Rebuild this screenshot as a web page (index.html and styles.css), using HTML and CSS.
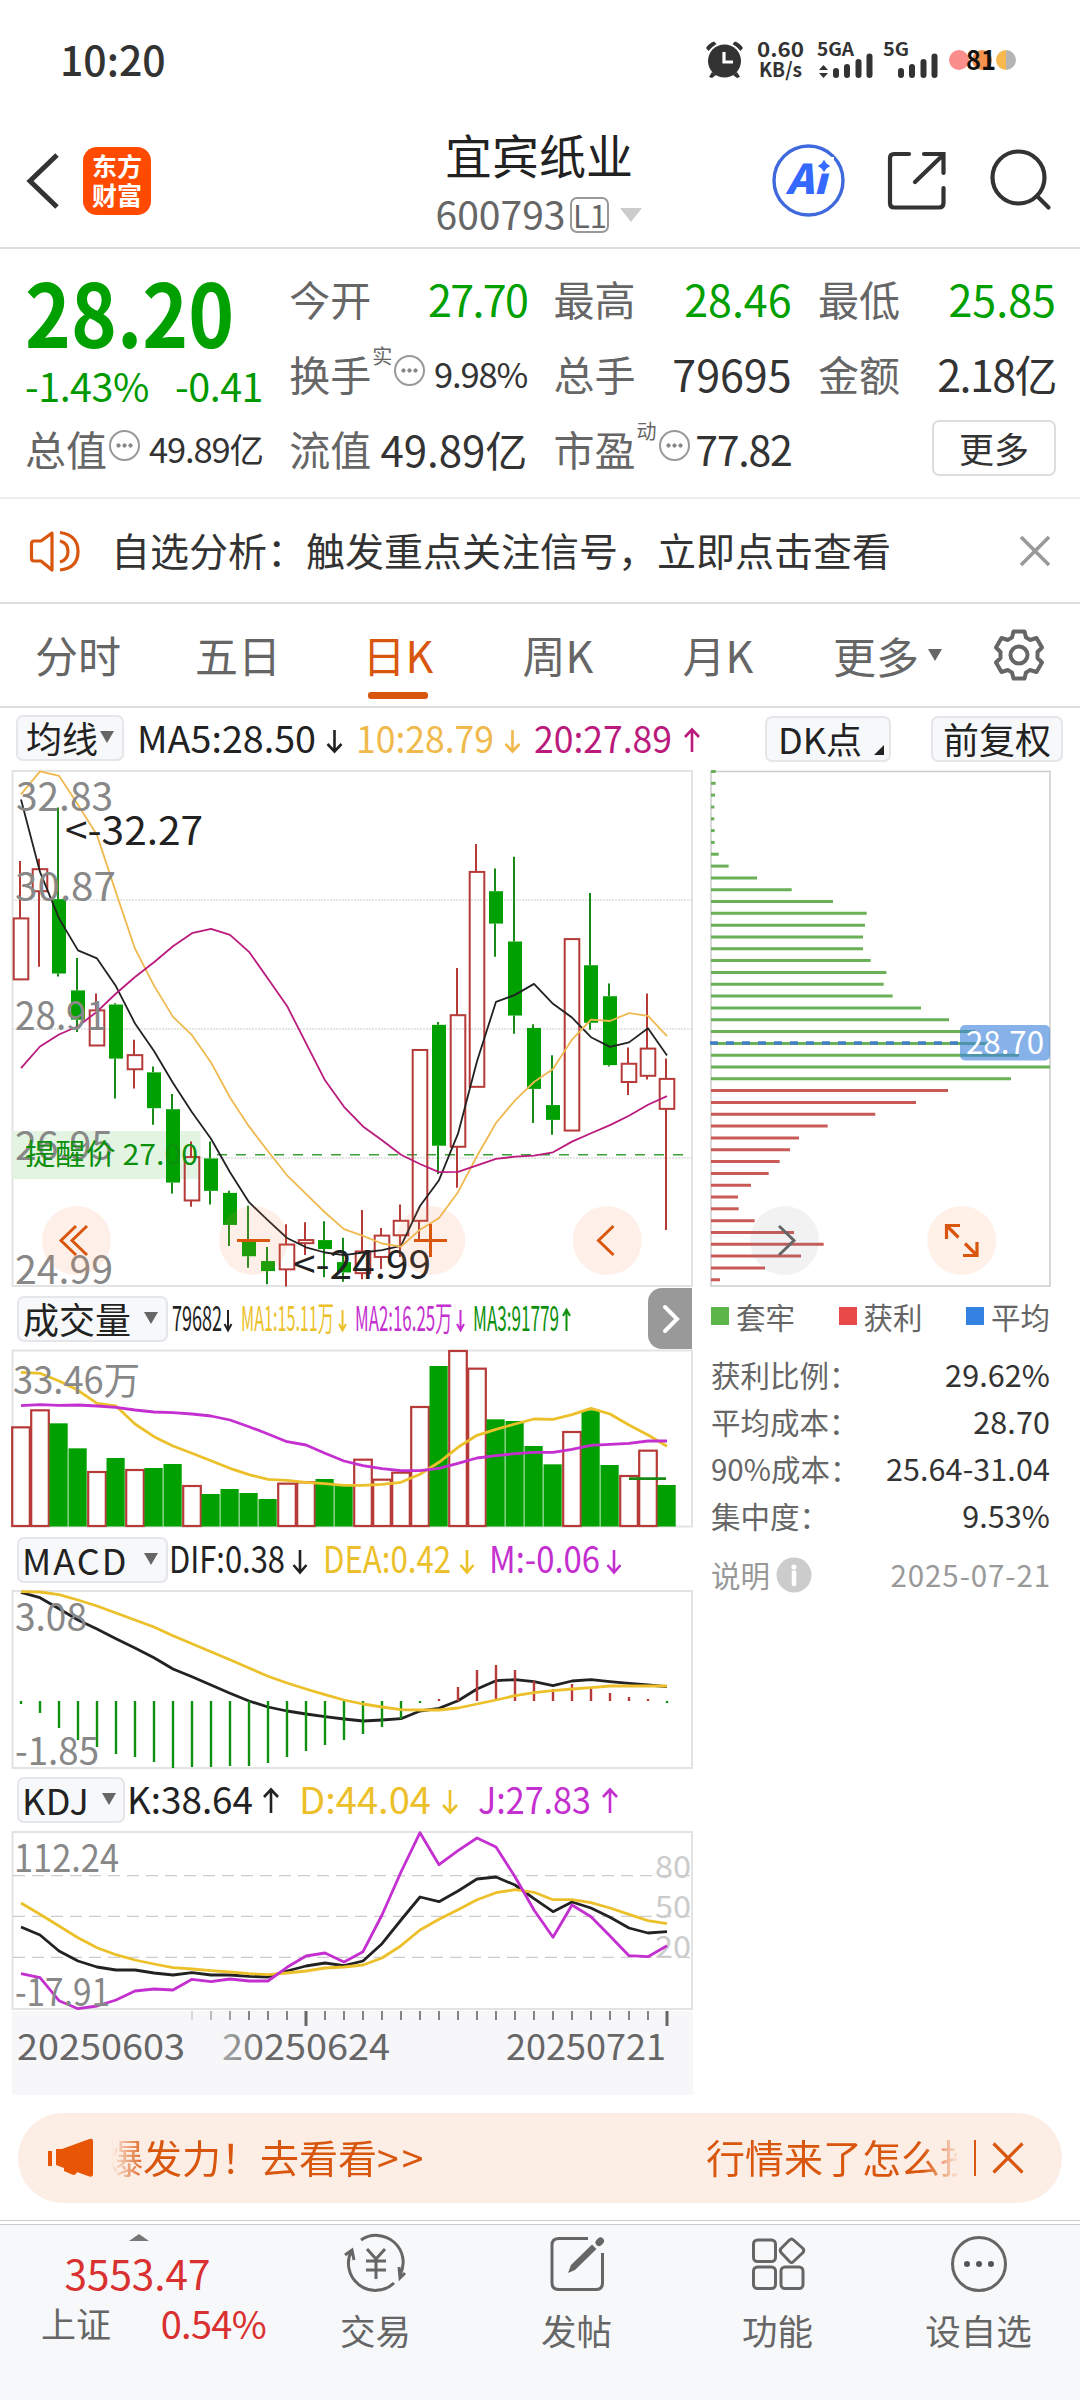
FILE: index.html
```html
<!DOCTYPE html>
<html lang="zh-CN">
<head>
<meta charset="utf-8">
<title>宜宾纸业 600793</title>
<link rel="stylesheet" href="styles.css">
</head>
<body>
<div class="status">
  <span class="clock">10:20</span>
  <svg class="status-icons" width="330" height="60" viewBox="700 30 330 60">
    <g fill="#333"><circle cx="724.500" cy="61" r="16.500"/><path d="M706 48 q3-5 8-6.500 l2.500 2.500 q-5 3-8 7z M743 48 q-3-5-8-6.500 l-2.500 2.500 q5 3 8 7z M712 72 l4 3-4 3-3-1z M737 72 l-4 3 4 3 3-1z"/></g>
    <path d="M724 52 V62 H733" fill="none" stroke="#fff" stroke-width="3.200"/>
    <g class="st-text">
      <text x="757" y="57" font-size="20.500" textLength="47" lengthAdjust="spacingAndGlyphs">0.60</text>
      <text x="759" y="77" font-size="19.500" textLength="43" lengthAdjust="spacingAndGlyphs">KB/s</text>
      <text x="817" y="56" font-size="18" textLength="37" lengthAdjust="spacingAndGlyphs">5GA</text>
      <text x="883" y="56" font-size="18" textLength="26" lengthAdjust="spacingAndGlyphs">5G</text>
    </g>
    <path d="M819 70 l4.500-5 4.500 5z M819 73 l4.500 5 4.500-5z" fill="#333"/>
    <path d="M836 71V75 M847 67V75 M858.500 62V75 M869.500 56.500V75 M901 71V75 M912 67V75 M923.500 62V75 M934.500 56.500V75" stroke="#333" stroke-width="6" stroke-linecap="round"/>
    <circle cx="959" cy="60" r="10" fill="#f98e8a"/><circle cx="982" cy="60" r="10" fill="#f5924d"/>
    <path d="M1006 50 a10 10 0 0 1 0 20z" fill="#b5b5b5"/><path d="M1006 50 a10 10 0 0 0 0 20z" fill="#f7b84e"/>
    <text x="966" y="70" class="batt" textLength="30" lengthAdjust="spacingAndGlyphs">81</text>
  </svg>
</div>

<header class="top">
  <svg width="40" height="60" viewBox="22 152 40 60"><path d="M57 156 L30 182 L57 208" fill="none" stroke="#333" stroke-width="5"/></svg>
  <div class="logo">东方<br>财富</div>
  <div class="title">
    <div class="name">宜宾纸业</div>
    <div class="code"><span>600793</span><i class="lv">L1</i><b class="tri light"></b></div>
  </div>
  <svg class="tools" width="300" height="80" viewBox="765 142 300 80">
    <circle cx="808.500" cy="181.500" r="34.500" fill="none" stroke="#3f69dd" stroke-width="3.400"/>
    <text x="786" y="195" class="ai" textLength="41" lengthAdjust="spacingAndGlyphs">Ai</text>
    <path d="M814 158 H834 V174.500 H814z" fill="#fff"/>
    <path d="M824 161.500 Q825.500 165.500 829.500 167 Q825.500 168.500 824 172.500 Q822.500 168.500 818.500 167 Q822.500 165.500 824 161.500z" fill="#3468ff" stroke="#3468ff"/>
    <path d="M909 155 H894 Q890 155 890 159 V204 Q890 208.500 894 208.500 H939 Q943.500 208.500 943.500 204 V189 M924 155 H943.500 V174 M942 157 L915 183" fill="none" stroke="#333" stroke-width="4.200" stroke-linecap="round"/>
    <circle cx="1018.500" cy="178.500" r="26" fill="none" stroke="#333" stroke-width="4.200"/><path d="M1037 197 L1048.500 208.500" stroke="#333" stroke-width="4.200" stroke-linecap="round"/>
  </svg>
</header>

<section class="quote">
  <div class="col first">
    <div class="price">28.20</div>
    <div class="chg"><span>-1.43%</span><span>-0.41</span></div>
    <div class="cell"><label>总值</label><i class="dots"></i><em class="v s">49.89亿</em></div>
  </div>
  <div class="col">
    <div class="cell"><label>今开</label><em class="v g tight">27.70</em></div>
    <div class="cell"><label>换手</label><sup>实</sup><i class="dots"></i><em class="v s">9.98%</em></div>
    <div class="cell"><label>流值</label><em class="v m">49.89亿</em></div>
  </div>
  <div class="col">
    <div class="cell"><label>最高</label><em class="v g">28.46</em></div>
    <div class="cell"><label>总手</label><em class="v">79695</em></div>
    <div class="cell"><label>市盈</label><sup>动</sup><i class="dots"></i><em class="v pe">77.82</em></div>
  </div>
  <div class="col">
    <div class="cell"><label>最低</label><em class="v g">25.85</em></div>
    <div class="cell"><label>金额</label><em class="v tight">2.18亿</em></div>
    <div class="cell end"><button class="more">更多</button></div>
  </div>
</section>

<section class="notice">
  <svg width="54" height="46" viewBox="28 527 54 46" fill="none" stroke="#d9560e" stroke-width="3.200" stroke-linejoin="round"><path d="M52 532 L41 540 H34 Q31.500 540 31.500 543 V557 Q31.500 560 34 560 H41 L52 569z M60 540 Q68 542 68 550.500 Q68 559 60 561 M60 531.500 Q78 534 78 550.500 Q78 567 60 569"/></svg>
  <p>自选分析：触发重点关注信号，立即点击查看</p>
  <svg width="32" height="32" viewBox="0 0 32 32"><path d="M2 2 L30 30 M30 2 L2 30" stroke="#999" stroke-width="3.600"/></svg>
</section>

<nav class="tabs">
  <a>分时</a><a>五日</a><a class="on">日K</a><a>周K</a><a>月K</a><a class="wide">更多<b class="tri sm"></b></a>
  <svg width="54" height="54" viewBox="-27 -27 54 54" fill="none" stroke="#666" stroke-width="4" stroke-linejoin="round"><path d="M-5.500 -23.500 H5.500 L7 -17.500 Q9 -16.500 11 -15 L17.500 -17 L23 -7.500 L18.500 -3 V3 L23 7.500 L17.500 17 L11 15 Q9 16.500 7 17.500 L5.500 23.500 H-5.500 L-7 17.500 Q-9 16.500 -11 15 L-17.500 17 L-23 7.500 L-18.500 3 V-3 L-23 -7.500 L-17.500 -17 L-11 -15 Q-9 -16.500 -7 -17.500z"/><circle r="8.500"/></svg>
</nav>

<div class="marow">
  <button class="chip c-ma">均线<b class="tri sm"></b></button>
  <svg width="620" height="56" viewBox="124 708 620 56" class="read">
    <text x="137" y="753" textLength="179" lengthAdjust="spacingAndGlyphs">MA5:28.50</text>
    <path class="ar" d="M334.500 730 V751 M327.500 744 L334.500 751.500 L341.500 744"/>
    <g class="c-o"><text x="356" y="753" textLength="138" lengthAdjust="spacingAndGlyphs">10:28.79</text>
    <path class="ar" d="M512.500 730 V751 M505.500 744 L512.500 751.500 L519.500 744"/></g>
    <g class="c-m"><text x="534" y="753" textLength="138" lengthAdjust="spacingAndGlyphs">20:27.89</text>
    <path class="ar" d="M692 752 V730 M685 737 L692 729.500 L699 737"/></g>
  </svg>
  <button class="chip c-dk">DK点<b class="corner"></b></button>
  <button class="chip c-fq">前复权</button>
</div>

<main class="charts">
  <div class="left">
    <svg id="kline" width="700" height="524" viewBox="0 764 700 524"></svg>
    <div class="ind">
      <button class="chip c-i">成交量<b class="tri"></b></button>
      <svg width="480" height="61" viewBox="168 1288 480 61" class="read vol">
        <text x="172" y="1331" textLength="50" lengthAdjust="spacingAndGlyphs">79682</text>
        <path class="ar" d="M228 1310 V1330 M224.500 1324 L228 1330.500 L231.500 1324"/>
        <g class="c-y"><text x="241" y="1331" textLength="93" lengthAdjust="spacingAndGlyphs">MA1:15.11万</text>
        <path class="ar" d="M342.500 1310 V1330 M339 1324 L342.500 1330.500 L346 1324"/></g>
        <g class="c-p"><text x="355" y="1331" textLength="97" lengthAdjust="spacingAndGlyphs">MA2:16.25万</text>
        <path class="ar" d="M460.500 1310 V1330 M457 1324 L460.500 1330.500 L464 1324"/></g>
        <g class="c-g"><text x="473" y="1331" textLength="86" lengthAdjust="spacingAndGlyphs">MA3:91779</text>
        <path class="ar" d="M566.500 1331 V1310 M563 1316 L566.500 1309.500 L570 1316"/></g>
      </svg>
      <div class="fold"><svg width="20" height="30" viewBox="0 0 20 30"><path d="M3 3 L15 15 L3 27" fill="none" stroke="#fff" stroke-width="4" stroke-linecap="round"/></svg></div>
    </div>
    <svg id="volume" width="700" height="182" viewBox="0 1349 700 182"></svg>
    <div class="ind macd">
      <button class="chip c-i latin">MACD<b class="tri"></b></button>
      <svg width="480" height="57" viewBox="168 1531 480 57" class="read">
        <text x="169" y="1573" textLength="116" lengthAdjust="spacingAndGlyphs">DIF:0.38</text>
        <path class="ar" d="M300 1550 V1572 M293.500 1565 L300 1572.500 L306.500 1565"/>
        <g class="c-y"><text x="323" y="1573" textLength="128" lengthAdjust="spacingAndGlyphs">DEA:0.42</text>
        <path class="ar" d="M467 1550 V1572 M460.500 1565 L467 1572.500 L473.500 1565"/></g>
        <g class="c-p"><text x="489" y="1573" textLength="111" lengthAdjust="spacingAndGlyphs">M:-0.06</text>
        <path class="ar" d="M614 1550 V1572 M607.500 1565 L614 1572.500 L620.500 1565"/></g>
      </svg>
    </div>
    <svg id="macd" width="700" height="183" viewBox="0 1588 700 183"></svg>
    <div class="ind kdj">
      <button class="chip c-k">KDJ<b class="tri"></b></button>
      <svg width="540" height="58" viewBox="125 1771 540 58" class="read">
        <text x="127" y="1813.500" textLength="126" lengthAdjust="spacingAndGlyphs">K:38.64</text>
        <path class="ar" d="M271 1813 V1790 M264 1797 L271 1789.500 L278 1797"/>
        <g class="c-y"><text x="299" y="1813.500" textLength="132" lengthAdjust="spacingAndGlyphs">D:44.04</text>
        <path class="ar" d="M450 1790 V1812 M443 1805 L450 1812.500 L457 1805"/></g>
        <g class="c-p"><text x="478" y="1813.500" textLength="113" lengthAdjust="spacingAndGlyphs">J:27.83</text>
        <path class="ar" d="M610 1813 V1790 M603 1797 L610 1789.500 L617 1797"/></g>
      </svg>
    </div>
    <svg id="kdj" width="700" height="182" viewBox="0 1829 700 182"></svg>
    <svg id="axis" width="700" height="84" viewBox="0 2011 700 84"></svg>
  </div>

  <aside class="right">
    <svg id="chips" width="380" height="524" viewBox="700 764 380 524"></svg>
    <div class="legend"><span><i class="sq green"></i>套牢</span><span><i class="sq red"></i>获利</span><span><i class="sq blue"></i>平均</span></div>
    <dl>
      <div><dt>获利比例：</dt><dd>29.62%</dd></div>
      <div><dt>平均成本：</dt><dd>28.70</dd></div>
      <div><dt>90%成本：</dt><dd>25.64-31.04</dd></div>
      <div><dt>集中度：</dt><dd>9.53%</dd></div>
    </dl>
    <div class="foot"><span>说明</span><svg width="36" height="36" viewBox="-18 -18 36 36"><circle r="17.500" fill="#ccc"/><circle cy="-8" r="2.600" fill="#fff"/><path d="M0 -2.500 V9" stroke="#fff" stroke-width="4.500" stroke-linecap="round"/></svg><time>2025-07-21</time></div>
  </aside>
</main>

<div class="banner">
  <svg width="48" height="42" viewBox="46 2137 48 42" fill="#e85504"><path d="M48 2151h4v15h-4z M56 2149 H62 L88 2139.500 Q93 2137.500 93 2141 V2174 Q93 2178 88 2176 L77 2172 Q76 2176 72 2174.500 L64 2171 V2168 L56 2165z"/></svg>
  <div class="ticker"><span>爆发力！去看看<b>&gt;&gt;</b></span><span>行情来了怎么投</span></div>
  <i class="bar"></i>
  <svg width="32" height="32" viewBox="0 0 32 32"><path d="M1.500 1.500 L30.500 30.500 M30.500 1.500 L1.500 30.500" stroke="#d9560e" stroke-width="3.200"/></svg>
</div>
<div class="rule"></div>

<footer class="nav">
  <div class="index"><b class="tri up"></b><strong>3553.47</strong><p><span>上证</span><em>0.54%</em></p></div>
  <a><svg width="68" height="60" viewBox="-34 -30 68 60" fill="none" stroke="#666" stroke-width="3"><path d="M-15 -23 A27 27 0 0 1 24 12 M29 10 L24 15 L23 4 M18 20 A27 27 0 0 1 -24 -13 M-31 -8 L-24 -13 L-22 -3"/><path d="M-9 -14 L0 -4 L9 -14 M0 -4 V16 M-10 -2 H10 M-10 7 H10"/></svg>交易</a>
  <a><svg width="60" height="60" viewBox="547 2233 60 60" fill="none" stroke="#666" stroke-width="3"><path d="M588 2238.500 H559 Q552 2238.500 552 2245 V2283 Q552 2289.500 559 2289.500 H596 Q602.500 2289.500 602.500 2283 V2253"/><path d="M568 2273 L571 2265 L592 2244.500 L596.500 2249 L575 2270z" fill="#666" stroke="none"/><path d="M599 2242.500 L600.500 2241" stroke-width="7" stroke-linecap="round"/></svg>发帖</a>
  <a><svg width="60" height="60" viewBox="748 2233 60 60" fill="none" stroke="#666" stroke-width="3" stroke-linejoin="round"><rect x="753.500" y="2240" width="22" height="21.500" rx="4"/><rect x="753.500" y="2267" width="22" height="21.500" rx="4"/><rect x="781" y="2267" width="22" height="21.500" rx="4"/><path d="M789.500 2240 Q791.500 2238 793.500 2240 L803 2248.500 Q804.500 2250.500 803 2252.500 L793.500 2261.500 Q791.500 2263.500 789.500 2261.500 L781 2252.500 Q779.500 2250.500 781 2248.500z"/></svg>功能</a>
  <a><svg width="60" height="60" viewBox="-30 -31 60 60"><circle r="26.500" fill="none" stroke="#666" stroke-width="3"/><circle cx="-12" r="3" fill="#555"/><circle r="3" fill="#555"/><circle cx="12" r="3" fill="#555"/></svg>设自选</a>
</footer>
<script src="charts.js"></script>
</body>
</html>
```
FILE: styles.css
```css
* { box-sizing: border-box; }
body { margin: 0; width: 1080px; height: 2400px; overflow: hidden; background: #fff; color: #333; font-family: "Noto Sans CJK SC", "Noto Sans", sans-serif; line-height: 1; display: flex; flex-direction: column; }
body > * { flex: none; }
svg { display: block; flex: none; }
i, em { font-style: normal; }
p, dl, dd { margin: 0; }
button { font: inherit; color: inherit; padding: 0; }
text { font-family: "Noto Sans CJK SC", "Noto Sans", sans-serif; }

.tri { width: 0; height: 0; border: 7.5px solid transparent; border-top: 12px solid #666; border-bottom: 0; flex: none; }
.tri.sm { border-width: 12px 7px 0; }
.tri.light { border-width: 14px 11px 0; border-top-color: #ccc; }
.tri.up { border: 10.5px solid transparent; border-top: 0; border-bottom: 7px solid #777; }

.status { height: 120px; display: flex; justify-content: space-between; align-items: flex-start; padding: 30px 50px 0 60px; }
.clock { font-size: 41px; font-weight: 500; line-height: 56px; }
.st-text text { font-weight: 700; fill: #333; }
.batt { font-size: 27px; font-weight: 700; fill: #111; }

.top { height: 129px; border-bottom: 2px solid #ddd; display: flex; align-items: center; padding: 0 15px 6px 22px; }
.logo { width: 68px; height: 68px; margin-left: 21px; border-radius: 14px; background: #ff4a00; color: #fff; font-weight: 700; font-size: 25px; line-height: 29px; text-align: center; padding-top: 4px; }
.title { flex: 1; display: flex; flex-direction: column; align-items: center; padding: 8px 0 0 162px; color: #222; }
.name { font-size: 47px; line-height: 50px; }
.code { display: flex; align-items: center; font-size: 39px; line-height: 54px; color: #666; margin-top: 11px; }
.code span { margin-top: -4px; }
.lv { width: 39px; height: 36px; border: 2px solid #999; border-radius: 7px; font-size: 31px; line-height: 31px; text-align: center; margin: 0 11px 0 5px; }
.ai { font-size: 41px; font-weight: 900; font-style: italic; fill: #3468ff; }

.quote { height: 250px; border-bottom: 2px solid #eee; display: grid; grid-template-columns: repeat(4, 238px); column-gap: 26.3px; padding: 12px 24px 0 25px; }
.col { display: grid; grid-template-rows: repeat(3, 75px); }
.cell { display: flex; align-items: center; height: 75px; }
.col label { font-size: 41px; color: #666; }
.v { margin-left: auto; font-size: 43px; white-space: nowrap; }
.v.s { font-size: 34.5px; letter-spacing: -1.1px; }
.v.m { font-size: 42px; }
.v.pe { font-size: 41px; letter-spacing: -1.2px; }
.g { color: #00a000; }
.v.tight { letter-spacing: -1.6px; }
sup { font-size: 20px; color: #666; align-self: flex-start; margin: 10px 0 0 1px; line-height: 20px; }
.dots { width: 31px; height: 31px; border: 2px solid #999; border-radius: 50%; margin: 0 0 6px 2px; background: radial-gradient(circle, #888 1.8px, transparent 2.4px) center / 7px 7px no-repeat, radial-gradient(circle, #888 1.8px, transparent 2.4px) 4px center / 7px 7px no-repeat, radial-gradient(circle, #888 1.8px, transparent 2.4px) 16px center / 7px 7px no-repeat; }
.price { font-size: 88px; font-weight: 700; color: #00a000; transform: scaleX(.885); transform-origin: left; line-height: 97px; height: 98px; }
.first { grid-template-rows: 98px 52px 75px; }
.chg { display: flex; justify-content: space-between; color: #009a00; font-size: 39.5px; line-height: 52px; letter-spacing: -.5px; }
.end { justify-content: flex-end; }
.more { width: 124px; height: 56px; border: 2px solid #ddd; border-radius: 7px; background: #fff; font-size: 35px; line-height: 48px; margin-bottom: 2px; }

.notice { height: 105px; border-bottom: 2px solid #ddd; display: flex; align-items: center; padding: 0 29px 0 28px; }
.notice p { font-size: 39px; margin-left: 29px; flex: 1; padding-bottom: 3px; }

.tabs { height: 104px; border-bottom: 2px solid #ddd; display: flex; align-items: center; }
.tabs a { width: 160px; height: 102px; font-size: 43px; line-height: 101px; color: #666; text-align: center; position: relative; right: 2px; }
.tabs a.wide { width: 193px; display: flex; align-items: center; padding-left: 35px; gap: 9px; }
.tabs svg { margin-left: -1px; }
.tabs .on { color: #d9560e; }
.on::after { content: ""; position: absolute; left: 50px; bottom: 7px; width: 60px; height: 7px; border-radius: 3px; background: #d9560e; }

.chip { display: flex; align-items: center; justify-content: space-between; height: 46px; border: 2px solid #e4e6ea; border-radius: 7px; background: #f7f8fa; color: #222; font-size: 36px; line-height: 42px; white-space: nowrap; flex: none; }
.marow { height: 56px; display: flex; align-items: center; padding-left: 16px; }
.c-ma { width: 108px; padding: 0 8px 2px; margin-top: 4px; }
.c-dk { width: 126px; margin: 6px 0 0 21px; padding: 0 0 2px 11px; position: relative; }
.c-fq { width: 132px; margin: 6px 0 0 40px; padding-bottom: 2px; justify-content: center; }
.corner { position: absolute; right: 5px; bottom: 5px; border: 5.5px solid #222; border-top-color: transparent; border-left-color: transparent; }
.read text { font-size: 37px; fill: currentColor; }
.read { color: #222; }
.read.vol text { font-size: 34px; }
.ar { fill: none; stroke: currentColor; stroke-width: 2.6px; }
.vol .ar { stroke-width: 2px; }
.c-o { color: #f0b94b; }
.c-m { color: #bb1a7d; }
.c-y { color: #ecc02a; }
.c-p { color: #c42fd0; }
.c-g { color: #0c900c; }

.charts { display: flex; height: 1331px; }
.left { width: 700px; }
.ind { height: 61px; display: flex; align-items: center; padding-left: 17px; }
.macd { height: 57px; }
.kdj { height: 58px; }
.c-i { width: 151px; padding: 0 8px 2px 4px; }
.latin { letter-spacing: 2px; padding-left: 3px; }
.c-k { width: 108px; padding: 0 7px 2px 3px; letter-spacing: .5px; }
.fold { width: 44px; height: 61px; background: #999; border-radius: 14px 0 0 14px; display: flex; align-items: center; justify-content: center; padding-left: 4px; }

.right { width: 380px; }
.legend { display: flex; align-items: flex-start; padding: 11px 0 0 11px; height: 64px; font-size: 29.5px; color: #666; line-height: 34px; }
.legend span { width: 127.5px; display: flex; align-items: center; flex: none; }
.sq { width: 18px; height: 18px; margin-right: 7px; }
.green { background: #5cb548; }
.red { background: #e84a4a; }
.blue { background: #3381e0; }
dl div { height: 47px; line-height: 44px; display: flex; justify-content: space-between; padding: 0 30px 0 11px; font-size: 29.5px; }
dt { color: #666; }
dd { font-size: 30.5px; letter-spacing: .1px; }
.foot { display: flex; align-items: center; height: 72px; padding: 0 29px 3px 11px; font-size: 29.5px; color: #999; }
.foot svg { margin-left: 6px; }
.foot time { margin-left: auto; letter-spacing: .9px; }

.banner { margin: 18px 18px 17px; height: 90px; border-radius: 45px; background: #fdeee5; display: flex; align-items: center; padding-left: 28px; }
.ticker { width: 846px; margin-left: 17px; display: flex; justify-content: space-between; overflow: hidden; white-space: nowrap; font-size: 39px; line-height: 60px; color: #d9560e; padding-bottom: 5px; -webkit-mask-image: linear-gradient(90deg, transparent, #000 36px, #000 812px, transparent 850px); mask-image: linear-gradient(90deg, transparent, #000 36px, #000 812px, transparent 850px); }
.ticker b { font-weight: 400; letter-spacing: 3px; }
.ticker span:first-child { margin-left: -7px; }
.ticker span:last-child { margin-right: -22px; }
.bar { width: 2px; height: 36px; background: #d9560e; margin: 0 16px 0 17px; }
.rule { height: 5px; border: solid #ccc; border-width: 1px 0; }

.nav { height: 175px; background: #f7f8fa; display: flex; }
.nav a { width: 201px; display: flex; flex-direction: column; align-items: center; padding-top: 8px; font-size: 35.5px; line-height: 44px; color: #666; gap: 15px; }
.nav a svg { height: 60px; }
.index { width: 275px; height: 130px; display: flex; flex-direction: column; align-items: center; padding-top: 9px; }
.index strong { font-weight: 400; font-size: 40.5px; line-height: 48px; color: #d93030; margin-top: 8px; }
.index p { width: 225px; display: flex; justify-content: space-between; align-items: center; font-size: 35px; line-height: 50px; margin: 1px 0 0 32px; color: #666; }
.index em { font-size: 38px; color: #d93030; letter-spacing: -.7px; }
.up { margin-left: 2px; }

.lab { font-size: 37.5px; fill: #888; }
.big { font-size: 39.5px; }
.mark { fill: #222; }
.lv-lab { font-size: 30px; fill: #ccc; }
.date { font-size: 36px; fill: #666; }
```
FILE: charts.js
```js
// Column i of every chart on the left is centred at x = 20 + 19 * i.
const X = i => 20 + 19 * i;
const RED = '#b53a38', GREEN = '#00a000', YELLOW = '#ecc02a', PURPLE = '#c42fd0', INK = '#222', ORANGE = '#d9560e';

const line = (vals, y, color, w) =>
  `<polyline points="${vals.map((v, i) => X(i) + 1 + ',' + y(v).toFixed(1)).join(' ')}" fill="none" stroke="${color}" stroke-width="${w}" stroke-linejoin="round"/>`;
const text = (x, y, len, cls, s, extra = '') =>
  `<text x="${x}" y="${y}" class="${cls}" textLength="${len}" lengthAdjust="spacingAndGlyphs" ${extra}>${s}</text>`;
const frame = (y1, y2) =>
  `<rect x="12.5" y="${y1}" width="679.5" height="${y2 - y1}" fill="none" stroke="#e3e3e3" stroke-width="2"/>`;
const put = (id, s) => { document.getElementById(id).innerHTML = s; };

// Price chart: [up?, high, body top, body bottom, low]
const yk = v => 760 + v / 2.9037;
const candles = [
  [1,293,460,637,637],[1,287,317,381,600],[0,138,404,620,629],[0,575,669,754,790],[1,678,727,829,829],
  [0,706,710,867,983],[1,812,857,898,954],[0,890,907,1011,1059],[0,970,1014,1227,1259],[1,1108,1153,1279,1297],
  [0,1108,1157,1251,1291],[0,1251,1257,1350,1411],[0,1294,1397,1441,1474],[0,1414,1455,1484,1522],[1,1348,1407,1479,1529],
  [1,1342,1394,1403,1437],[0,1339,1394,1420,1502],[0,1387,1458,1488,1515],[1,1307,1427,1490,1508],[1,1359,1381,1443,1478],
  [1,1291,1338,1380,1443],[1,842,842,1338,1392],[0,761,769,1120,1202],[1,604,741,1123,1242],[1,244,325,949,949],
  [0,315,381,475,571],[0,281,527,742,795],[0,767,778,955,1054],[0,857,1002,1045,1088],[1,520,520,1076,1076],
  [0,386,596,763,783],[0,649,686,886,890],[1,835,882,935,973],[1,678,838,917,928],[1,867,926,1013,1365]];
const ma5 = [115,325,460,553,576,657,765,845,938,1023,1100,1197,1284,1337,1388,1415,1430,1438,1430,1423,1411,1295,1220,1085,875,702,682,650,708,748,805,833,820,779,858];
const ma10 = [100,33,46,130,218,385,548,655,746,799,878,980,1064,1136,1206,1260,1314,1362,1382,1404,1413,1364,1330,1255,1150,1054,988,935,897,812,754,758,735,743,802];
const ma20 = [895,832,797,773,731,678,630,587,541,503,490,508,557,635,714,822,930,1007,1064,1104,1146,1173,1197,1196,1177,1158,1152,1149,1139,1108,1084,1060,1033,1001,976];

let k = frame(771, 1286);
for (const y of [900, 1029, 1158]) k += `<path d="M12 ${y}H692" stroke="#ddd" stroke-width="1.5" stroke-dasharray="2 1"/>`;
k += '<rect x="12.5" y="1131" width="188" height="48" fill="#e3f4e3"/><path d="M217 1154.7H688" stroke="#3aa03a" stroke-width="1.4" stroke-dasharray="10 9"/>';
candles.forEach(([up, h, t, b, l], i) => {
  const x = X(i), T = yk(t), B = yk(b), c = up ? RED : GREEN;
  k += `<path d="M${x} ${yk(h)}V${T}M${x} ${B}V${yk(l)}" stroke="${up ? RED : '#188a18'}" stroke-width="2"/>`;
  k += up ? `<rect x="${x - 6.3}" y="${T}" width="14.6" height="${B - T}" fill="none" stroke="${c}" stroke-width="2"/>`
          : `<rect x="${x - 6}" y="${T}" width="14" height="${B - T}" fill="${c}"/>`;
});
k += line(ma5, yk, INK, 1.8) + line(ma10, yk, '#efb94f', 1.8) + line(ma20, yk, '#bb1a7d', 1.8);
k += text(16, 811, 97, 'lab big', '32.83') + text(15, 900.5, 101, 'lab big', '30.87') + text(15, 1030, 92, 'lab big', '28.91')
   + text(15, 1159.5, 98, 'lab big', '26.95') + text(15, 1284, 98, 'lab big', '24.99');
k += text(25, 1165, 173, '', '提醒价 27.00', 'font-size="29" fill="#0c900c"');
k += text(65, 845, 138, 'lab big mark', '&lt;-32.27') + text(293, 1279, 138, 'lab big mark', '&lt;-24.99');
for (const x of [76.5, 253.5, 430.7, 607.3]) k += `<circle cx="${x}" cy="1240.5" r="34.5" fill="#fa8c50" fill-opacity=".13"/>`;
k += `<path d="M76 1226 L61 1240.5 L76 1255 M87 1226 L72 1240.5 L87 1255 M237 1240.5H270 M414 1240.5H447 M430.5 1224V1257 M613.5 1226 L598.5 1240.5 L613.5 1255" fill="none" stroke="${ORANGE}" stroke-width="3"/>`;
put('kline', k);

// Volume: [up?, bar top]
const y3 = base => v => base + v / 3;
const yv = y3(1290);
const vols = [[1,412],[1,361],[0,400],[0,475],[1,546],[0,504],[1,540],[0,534],[0,522],[1,588],[0,612],[0,597],[0,609],[0,627],[1,581],[1,577],[0,567],[0,583],[1,509],[1,569],[1,548],[1,351],[0,228],[1,183],[1,236],[0,388],[0,393],[0,468],[0,523],[1,426],[0,361],[0,525],[1,558],[1,482],[0,585]];
const vma5 = [247,250,273,301,340,348,402,440,468,490,512,535,554,568,571,577,581,586,586,583,577,553,517,472,436,418,402,387,388,374,355,372,405,435,469];
const vma10 = [347,344,346,345,348,352,360,366,368,372,378,390,410,432,455,465,490,513,527,536,542,542,535,520,504,497,491,487,487,478,466,463,460,453,453];
let v = frame(1350.5, 1526.5);
vols.forEach(([up, t], i) => {
  const x = X(i) - 8.5, y = yv(t);
  v += up ? `<rect x="${x + .7}" y="${y}" width="17.6" height="${1526 - y}" fill="none" stroke="${RED}" stroke-width="2.2"/>`
          : `<rect x="${x}" y="${y}" width="18.2" height="${1526.5 - y}" fill="${GREEN}"/>`;
});
v += line(vma5, yv, YELLOW, 2.8) + line(vma10, yv, PURPLE, 2.8) + '<path d="M629 1478.7H666" stroke="#188a18" stroke-width="2.8"/>';
v += text(13, 1394, 127, 'lab', '33.46万');
put('volume', v);

// MACD
const ym = y3(1580);
const hist = [372,399,444,480,501,522,531,546,564,561,561,558,558,549,531,513,495,480,462,441,417,369,357,321,270,255,270,303,327,312,321,339,351,357,369];
const dif = [37,53,86,120,147,176,204,233,267,290,315,340,363,381,393,402,410,417,423,420,416,393,385,362,327,302,299,305,317,303,299,305,310,315,320];
const dea = [35,36,44,60,78,99,120,141,167,191,215,239,264,289,309,327,344,360,372,381,389,390,390,384,372,360,347,338,332,327,323,318,318,318,318];
let m = frame(1591, 1768);
m += line(dif, ym, INK, 2.8);
hist.forEach((h, i) => { m += `<path d="M${X(i) + 1} ${ym(363)}V${ym(h)}" stroke="${h > 363 ? '#109010' : RED}" stroke-width="2.4"/>`; });
m += line(dea, ym, YELLOW, 2.8);
m += text(15, 1631, 72, 'lab', '3.08') + text(15, 1765, 84, 'lab', '-1.85');
put('macd', m);

// KDJ
const yj = y3(1800);
const K = [381,405,453,483,501,510,510,519,525,518,525,525,529,531,513,498,489,497,483,431,360,291,305,273,237,231,255,296,335,306,324,352,384,399,395];
const D = [309,343,378,413,443,464,480,492,503,507,512,516,521,524,519,513,504,501,495,474,437,390,358,329,299,278,269,277,299,299,308,324,343,362,371];
const J = [521,533,602,626,618,600,573,567,570,538,545,537,543,543,502,468,459,486,455,345,216,98,194,152,114,141,230,330,412,315,350,408,467,470,437];
let j = frame(1832, 2009);
for (const y of [227, 349, 472]) j += `<path d="M13 ${yj(y)}H692" stroke="#ccc" stroke-width="1.4" stroke-dasharray="12 7"/>`;
j += text(655, 1877.5, 36, 'lv-lab', '80') + text(655, 1918, 36, 'lv-lab', '50') + text(655, 1957.5, 36, 'lv-lab', '20');
j += line(K, yj, INK, 2.8) + line(D, yj, YELLOW, 2.8) + line(J, yj, PURPLE, 2.8);
j += text(14, 1872, 105, 'lab', '112.24') + text(15, 2005.5, 95, 'lab', '-17.91');
put('kdj', j);

// Date axis
let a = '<defs><linearGradient id="fade"><stop offset="0" stop-color="#aaa"/><stop offset=".25" stop-color="#666"/></linearGradient></defs><rect x="12" y="2011" width="681" height="84" fill="#f7f7fa"/>';
for (let i = 9; i < 35; i++) {
  const major = i === 15 || i === 34;
  a += `<path d="M${X(i) + 1} 2011V${major ? 2026 : 2020}" stroke="#666" stroke-width="${major ? 3 : 1.6}" stroke-opacity="${Math.min(1, (i - 8) / 4)}"/>`;
}
a += text(17, 2060, 168, 'date', '20250603') + text(222, 2060, 168, 'date', '20250624', 'style="fill:url(#fade)"') + text(506, 2060, 160, 'date', '20250721');
put('axis', a);

// Chip distribution: bar ends, from the top price down
const ends = [77,77,75,73,73,74,74,86,116,201,305,429,530,525,519,519,542,589,581,608,693,777,856,895,987,1080,963,774,678,556,413,327,300,269,236,183,144,146,194,312,401,333,225,90];
let c = '<rect x="711" y="771.5" width="339" height="514.5" fill="none" stroke="#ccc" stroke-width="1.5"/>';
ends.forEach((e, i) => { c += `<path d="M711 ${(771.5 + i * 11.82).toFixed(1)}H${690 + e / 3}" stroke="${i < 27 ? '#69b057' : '#c95a58'}" stroke-width="3"/>`; });
c += '<path d="M710 1043H960" stroke="#3f7fc4" stroke-width="3.5" stroke-dasharray="8"/>';
c += '<rect x="960" y="1025" width="90" height="35.5" rx="5" fill="#3f85dc" fill-opacity=".63"/>' + text(966, 1054, 78, '', '28.70', 'font-size="31" fill="#fff"');
c += '<circle cx="784.5" cy="1240.5" r="34.5" fill="#888" fill-opacity=".11"/><circle cx="961.7" cy="1240.5" r="34.5" fill="#fff0e8"/>';
c += '<path d="M779 1226 L794 1240.5 L779 1255" fill="none" stroke="#666" stroke-width="3"/>';
c += `<path d="M946.5 1239V1225.5H960 M947 1226L958.5 1237.5 M963 1255.5H977V1242 M976.5 1255L965 1243.5" fill="none" stroke="${ORANGE}" stroke-width="3.2"/>`;
put('chips', c);
```
